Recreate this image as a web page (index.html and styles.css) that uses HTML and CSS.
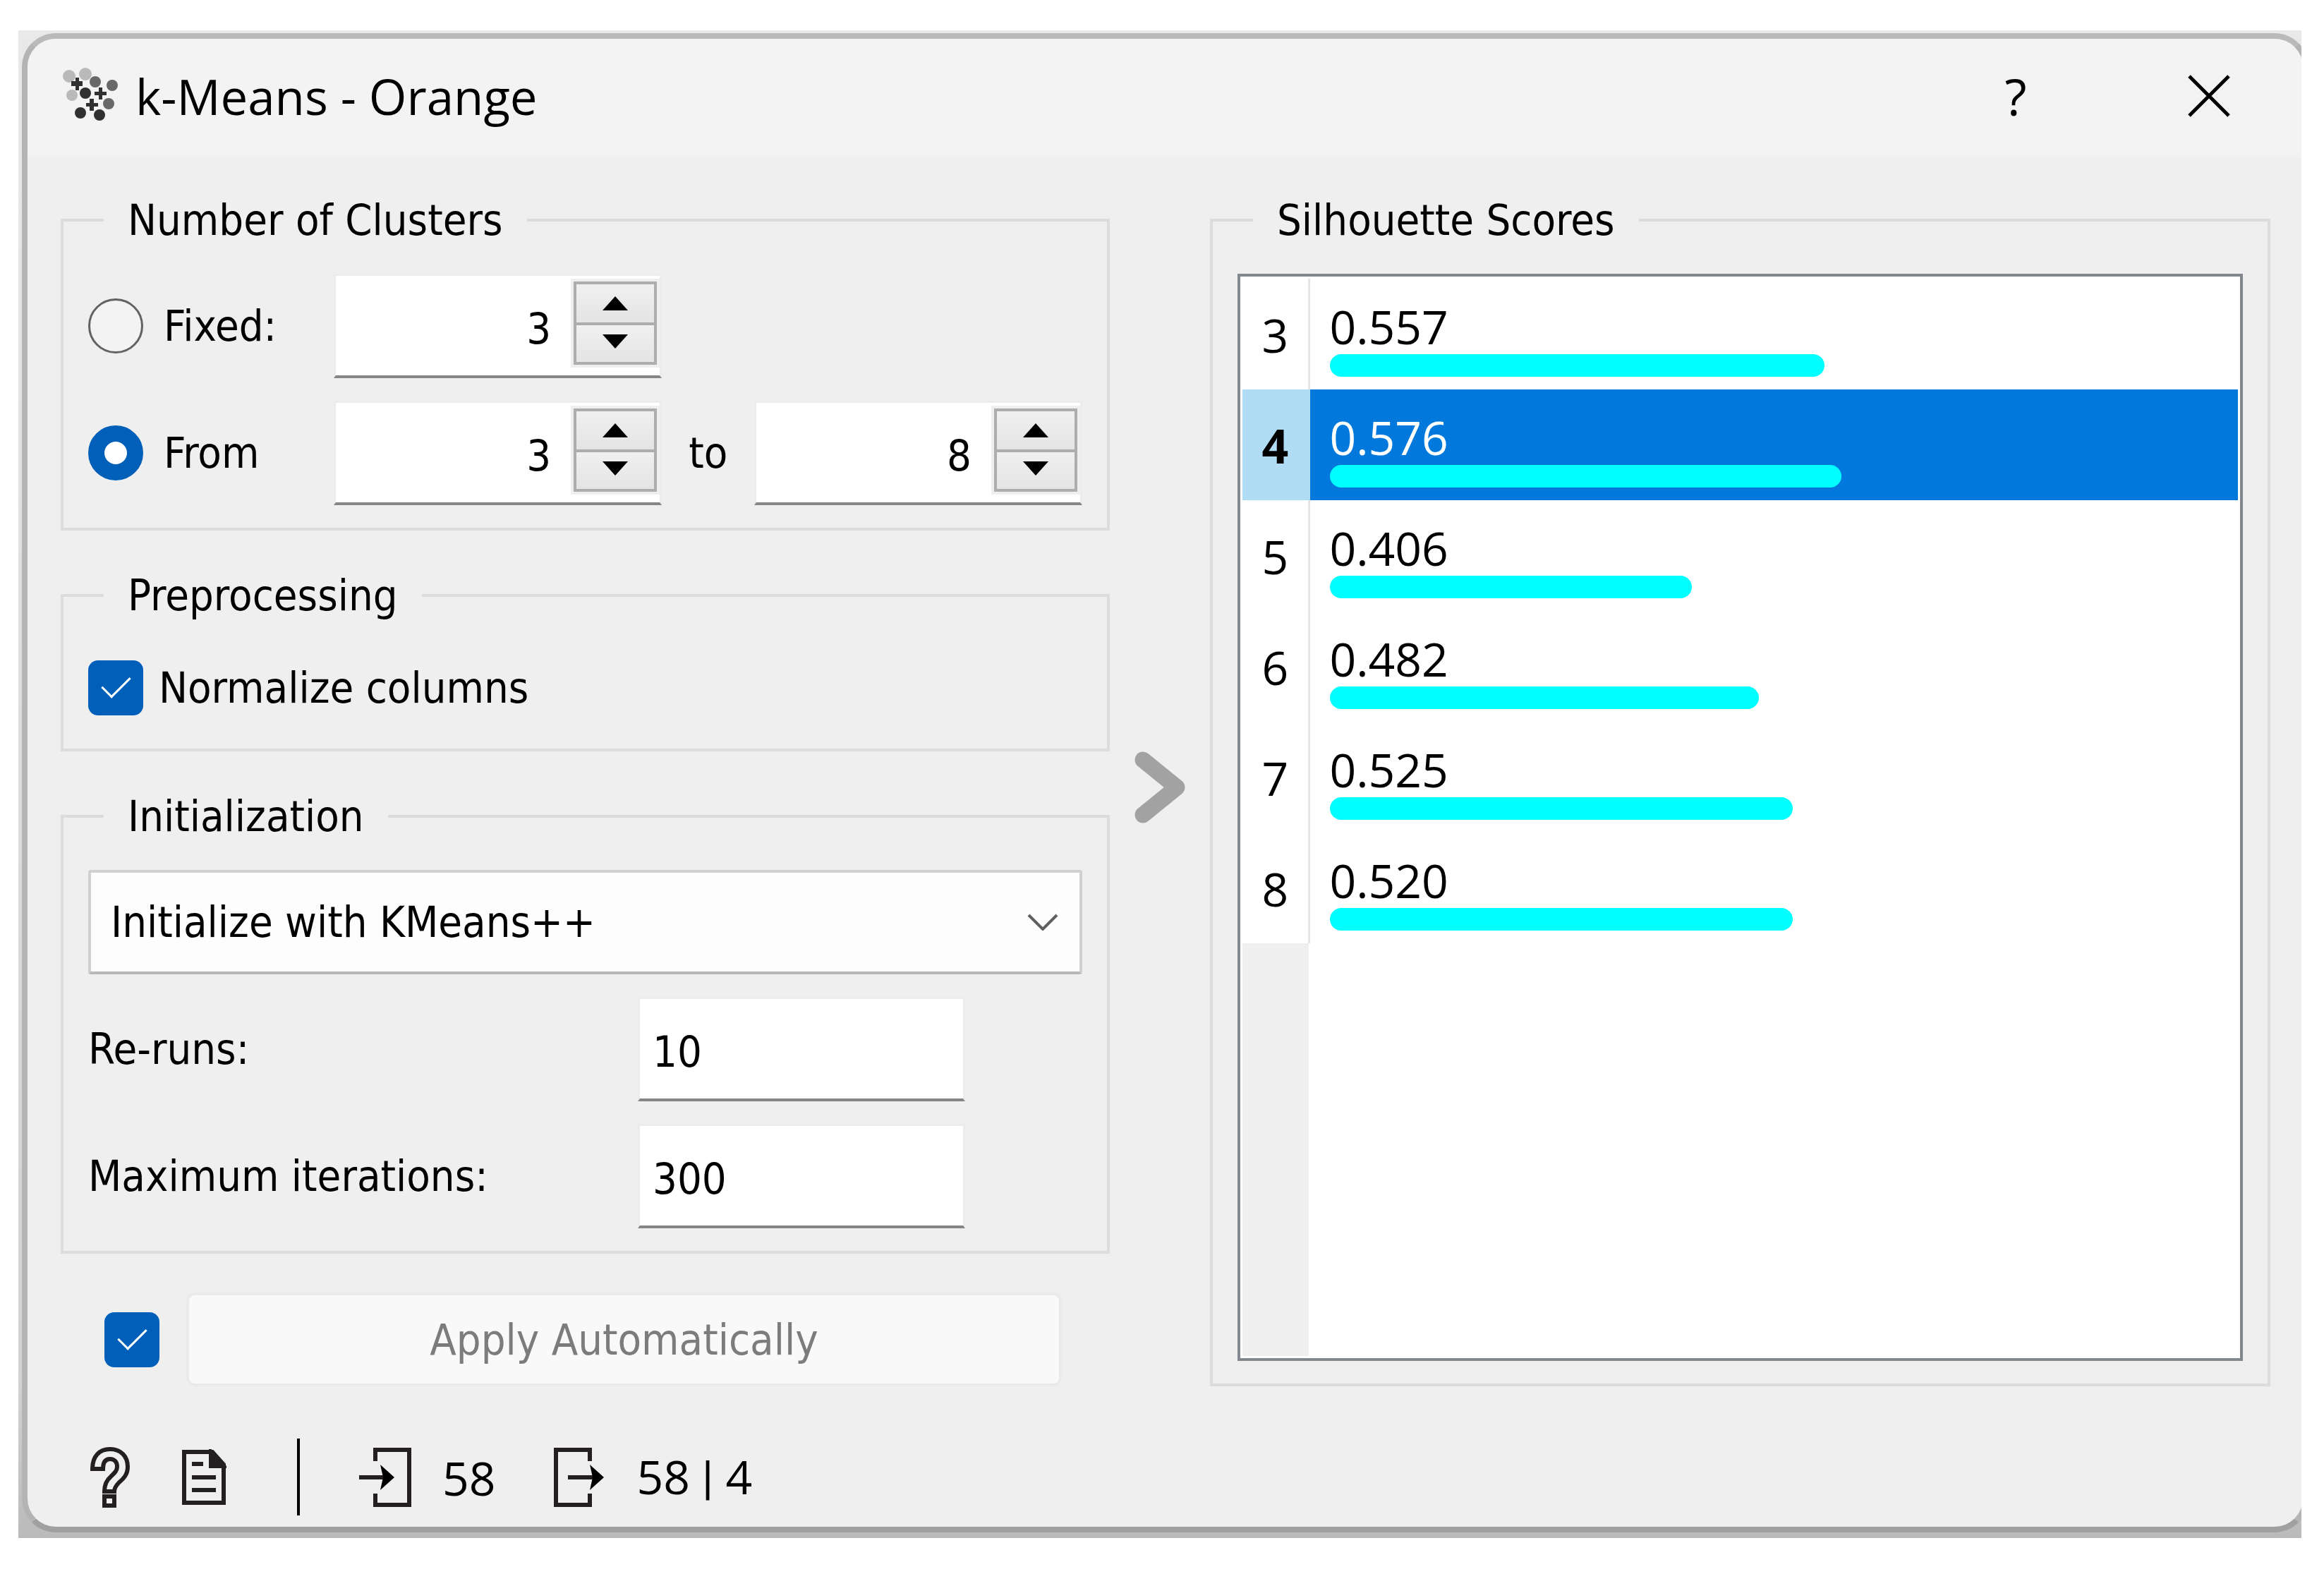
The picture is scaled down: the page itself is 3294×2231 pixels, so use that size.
FILE: index.html
```html
<!DOCTYPE html>
<html lang="en">
<head>
    <meta charset="UTF-8">
    <meta name="viewport" content="width=device-width, initial-scale=1.0">
    <title>k-Means - Orange</title>
    <link rel="stylesheet" href="styles.css">
</head>
<body>
    <div class="backdrop">
        <div class="window">
            <header class="titlebar">
                <svg class="app-icon" viewBox="0 0 80 80" aria-hidden="true">
                    <g fill="#b9b9b9">
                        <circle cx="10" cy="12" r="9"/>
                        <circle cx="33" cy="9" r="9"/>
                        <circle cx="14" cy="39" r="8"/>
                    </g>
                    <g fill="#686868">
                        <circle cx="47" cy="20" r="8"/>
                        <circle cx="71" cy="25" r="8"/>
                        <circle cx="66" cy="51" r="8"/>
                    </g>
                    <g fill="#303030">
                        <circle cx="33" cy="36" r="8"/>
                        <circle cx="26" cy="64" r="8"/>
                        <circle cx="53" cy="67" r="8"/>
                        <path d="M19 14h5v5h5v7h-5v6h-5v-6h-6v-7h6z"/>
                        <path d="M52 28h5v6h6v5h-6v6h-5v-6h-6v-5h6z"/>
                        <path d="M39 44h6v6h6v5h-6v6h-6v-6h-5v-5h5z"/>
                    </g>
                </svg>
                <h1>k-Means - Orange</h1>
                <button type="button" class="title-button">?</button>
                <button type="button" class="title-button" aria-label="Close">
                    <svg class="close-icon" viewBox="0 0 60 60"><path d="M2 2l56 56M58 2L2 58"/></svg>
                </button>
            </header>

            <main class="content">
                <form class="settings">
                    <fieldset>
                        <legend>Number of Clusters</legend>
                        <div class="cluster-row">
                            <label class="choice"><input type="radio" name="clusters">Fixed:</label>
                            <div class="spin">
                                <input type="number" value="3" aria-label="Fixed number of clusters">
                                <div class="stepper">
                                    <button type="button" aria-label="Increase"><svg viewBox="0 0 36 20"><path d="M18 0l18 20H0z"/></svg></button>
                                    <button type="button" aria-label="Decrease"><svg viewBox="0 0 36 20"><path d="M0 0h36L18 20z"/></svg></button>
                                </div>
                            </div>
                        </div>
                        <div class="cluster-row">
                            <label class="choice"><input type="radio" name="clusters" checked>From</label>
                            <div class="spin">
                                <input type="number" value="3" aria-label="From">
                                <div class="stepper">
                                    <button type="button" aria-label="Increase"><svg viewBox="0 0 36 20"><path d="M18 0l18 20H0z"/></svg></button>
                                    <button type="button" aria-label="Decrease"><svg viewBox="0 0 36 20"><path d="M0 0h36L18 20z"/></svg></button>
                                </div>
                            </div>
                            <label class="to" for="kTo">to</label>
                            <div class="spin">
                                <input type="number" id="kTo" value="8">
                                <div class="stepper">
                                    <button type="button" aria-label="Increase"><svg viewBox="0 0 36 20"><path d="M18 0l18 20H0z"/></svg></button>
                                    <button type="button" aria-label="Decrease"><svg viewBox="0 0 36 20"><path d="M0 0h36L18 20z"/></svg></button>
                                </div>
                            </div>
                        </div>
                    </fieldset>

                    <fieldset>
                        <legend>Preprocessing</legend>
                        <div class="check-row">
                            <label class="choice check"><input type="checkbox" checked>Normalize columns</label>
                        </div>
                    </fieldset>

                    <fieldset>
                        <legend>Initialization</legend>
                        <div class="combo">
                            <select aria-label="Initialization">
                                <option>Initialize with KMeans++</option>
                                <option>Random initialization</option>
                            </select>
                            <svg viewBox="0 0 44 24" aria-hidden="true"><path d="M2 2l20 20L42 2"/></svg>
                        </div>
                        <div class="field-row">
                            <label for="reruns">Re-runs:</label>
                            <input type="text" id="reruns" value="10">
                        </div>
                        <div class="field-row">
                            <label for="iterations">Maximum iterations:</label>
                            <input type="text" id="iterations" value="300">
                        </div>
                    </fieldset>

                    <div class="apply-row">
                        <input type="checkbox" checked aria-label="Apply automatically">
                        <button type="button" class="apply" disabled>Apply Automatically</button>
                    </div>
                </form>

                <div class="splitter">
                    <svg viewBox="0 0 72 102" aria-hidden="true"><path d="M12 12l48 39-48 39"/></svg>
                </div>

                <fieldset class="scores">
                    <legend>Silhouette Scores</legend>
                    <div class="table-frame">
                        <table>
                            <tr>
                                <th scope="row">3</th>
                                <td>0.557<div class="bar" style="width: 55.7%"></div></td>
                            </tr>
                            <tr class="selected">
                                <th scope="row">4</th>
                                <td>0.576<div class="bar" style="width: 57.6%"></div></td>
                            </tr>
                            <tr>
                                <th scope="row">5</th>
                                <td>0.406<div class="bar" style="width: 40.8%"></div></td>
                            </tr>
                            <tr>
                                <th scope="row">6</th>
                                <td>0.482<div class="bar" style="width: 48.3%"></div></td>
                            </tr>
                            <tr>
                                <th scope="row">7</th>
                                <td>0.525<div class="bar" style="width: 52.1%"></div></td>
                            </tr>
                            <tr>
                                <th scope="row">8</th>
                                <td>0.520<div class="bar" style="width: 52.1%"></div></td>
                            </tr>
                        </table>
                        <div class="header-rest"></div>
                    </div>
                </fieldset>
            </main>

            <footer class="statusbar">
                <button type="button" class="status-button" aria-label="Help">
                    <svg class="help-icon" viewBox="0 0 58 88">
                        <path d="M4 32C4 14 14 4 29 4s25 10 25 25c0 11-6 17-12 22-5 5-7 8-7 13H21c0-10 3-16 9-21 5-5 9-8 9-14 0-7-4-11-10-11s-10 4-10 14zM21 71h14v13H21z"/>
                    </svg>
                </button>
                <button type="button" class="status-button" aria-label="Report">
                    <svg class="report-icon" viewBox="0 0 64 80">
                        <path d="M4 4h40l16 18v54H4z"/>
                        <path d="M42 4v20h18z" fill="#231f20"/>
                        <path d="M15 21h16M15 40h34M15 58h34"/>
                    </svg>
                </button>
                <span class="divider"></span>
                <svg class="io-icon" viewBox="0 0 74 88" aria-hidden="true">
                    <path class="frame" d="M23 21V5h48v78H23V67"/>
                    <path class="shaft" d="M0 44h36"/>
                    <path d="M30 26l20 18-20 18 4-18z"/>
                </svg>
                <span class="count">58</span>
                <svg class="io-icon" viewBox="0 0 74 88" aria-hidden="true">
                    <path class="frame" d="M52 21V5H4v78h48V67"/>
                    <path class="shaft" d="M21 44h36"/>
                    <path d="M52 26l20 18-20 18 4-18z"/>
                </svg>
                <span class="count">58 <span class="bar-sign">|</span> 4</span>
            </footer>
        </div>
    </div>
</body>
</html>
```
FILE: styles.css
```css
* {
    box-sizing: border-box;
}
body {
    margin: 43px 32px 51px 26px;
    background: white;
    color: black;
    font-family: "DejaVu Sans Condensed", "Noto Sans", sans-serif;
    font-size: 61px;
    line-height: 74px;
}
input, select, button {
    font: inherit;
    color: inherit;
    margin: 0;
}
button {
    padding: 0;
    border: none;
    background: none;
}
svg {
    display: block;
    flex: none;
}

/* window */
.backdrop {
    overflow: hidden;
    padding: 4px 0 8px 5px;
    background: linear-gradient(#e9e9e9, #d2d2d2 90%, #bababa);
}
.window {
    margin-right: -10px;
    border: 8px solid #b4b4b4;
    border-top-color: #bababa;
    border-bottom-color: #a0a0a0;
    border-radius: 48px;
    background: #efefef;
    overflow: hidden;
}
.titlebar {
    display: flex;
    align-items: center;
    height: 168px;
    padding: 0 103px 6px 49px;
    background: #f3f3f3;
}
.app-icon {
    width: 80px;
    height: 80px;
    margin-right: 24px;
}
h1 {
    flex: 1;
    margin: 0;
    font-family: "Open Sans", sans-serif;
    font-size: 69px;
    font-weight: normal;
}
.title-button {
    display: flex;
    align-items: center;
    justify-content: center;
    width: 60px;
    height: 100px;
    margin-left: 214px;
    font-family: "Open Sans", sans-serif;
    font-size: 72px;
}
.close-icon {
    width: 60px;
    height: 60px;
    fill: none;
    stroke: black;
    stroke-width: 5;
}

/* groups */
.content {
    display: grid;
    grid-template-columns: minmax(0, 1487fr) 142px minmax(0, 1503fr);
    padding: 52px 46px 0 47px;
}
.settings {
    display: flex;
    flex-direction: column;
    gap: 55px;
}
fieldset {
    min-width: 0;
    margin: 0;
    padding: 39px 35px 32px;
    border: 4px solid #dcdcdc;
    display: flex;
    flex-direction: column;
    gap: 32px;
}
legend {
    margin-left: 22px;
    padding: 0 34px;
}
.cluster-row {
    display: grid;
    grid-template-columns: minmax(0, 348fr) minmax(0, 464fr) minmax(0, 131fr) minmax(0, 464fr);
    align-items: center;
}
.choice {
    display: flex;
    align-items: center;
    gap: 29px;
    white-space: nowrap;
}
.check {
    gap: 22px;
}
.to {
    text-align: center;
}
input[type="radio"], input[type="checkbox"] {
    appearance: none;
    flex: none;
    display: grid;
    place-content: center;
    width: 78px;
    height: 78px;
}
input[type="radio"] {
    border: 3px solid #626262;
    border-radius: 50%;
    background: #f3f3f3;
}
input[type="radio"]:checked {
    border: 23px solid #005fb8;
    background: white;
}
input[type="checkbox"] {
    border-radius: 14px;
    background: #005fb8;
}
input[type="checkbox"]::after {
    content: "";
    width: 18px;
    height: 36px;
    margin-bottom: 12px;
    border: solid white;
    border-width: 0 3px 3px 0;
    transform: rotate(45deg);
}

/* spin boxes */
.spin, .field-row input {
    height: 148px;
    border: 3px solid #ececec;
    border-bottom: 4px solid #858585;
    background: white;
}
.spin {
    display: flex;
}
.spin input {
    flex: 1;
    min-width: 0;
    padding: 8px 28px 0 0;
    border: none;
    background: none;
    text-align: right;
    appearance: textfield;
}
.spin input::-webkit-inner-spin-button {
    appearance: none;
    margin: 0;
}
.stepper {
    flex: none;
    display: grid;
    grid-template-rows: 62px 56px;
    width: 126px;
    height: 126px;
    margin-top: 4px;
    border: 4px solid #efefef;
}
.stepper button {
    display: flex;
    align-items: center;
    justify-content: center;
    border: 4px solid #adadad;
    background: linear-gradient(#f0f0f0, #e4e4e4);
}
.stepper button + button {
    border-top: none;
    padding-bottom: 6px;
}
.stepper svg {
    width: 36px;
    height: 20px;
}

/* preprocessing, initialization */
.check-row {
    display: flex;
    align-items: center;
    height: 109px;
}
.combo {
    position: relative;
}
.combo select {
    appearance: none;
    display: block;
    width: 100%;
    height: 148px;
    padding: 0 120px 0 28px;
    border: 4px solid #d0d0d0;
    border-bottom-color: #b8b8b8;
    border-radius: 4px;
    background: #fdfdfd;
}
.combo svg {
    position: absolute;
    top: 62px;
    right: 34px;
    width: 44px;
    height: 24px;
    fill: none;
    stroke: #606060;
    stroke-width: 4;
    pointer-events: none;
}
.field-row {
    display: grid;
    grid-template-columns: 779fr 464fr 166fr;
    align-items: center;
}
.field-row input {
    width: 100%;
    padding: 8px 18px 0;
}
.apply-row {
    display: flex;
    align-items: center;
    gap: 38px;
    padding: 0 68px 0 62px;
}
.apply {
    flex: 1;
    height: 133px;
    border: 4px solid #eaeaea;
    border-radius: 12px;
    background: #f9f9f9;
    color: #7c7c7c;
}
.splitter {
    display: flex;
    align-items: center;
    justify-content: center;
    padding-bottom: 8px;
}
.splitter svg {
    width: 72px;
    height: 102px;
    fill: none;
    stroke: #a2a2a2;
    stroke-width: 23;
    stroke-linecap: round;
    stroke-linejoin: round;
}

/* scores */
.table-frame {
    flex: 1;
    display: flex;
    flex-direction: column;
    padding: 3px;
    border: 4px solid #828790;
    background: white;
    font-family: "Open Sans", sans-serif;
    font-size: 66px;
}
table {
    width: 100%;
    border-collapse: collapse;
    table-layout: fixed;
}
th {
    width: 94px;
    padding: 0;
    border-right: 3px solid #e5e5e5;
    font-weight: normal;
}
td {
    height: 157px;
    padding: 34px 28px 18px;
    line-height: 67px;
}
.bar {
    height: 32px;
    margin-top: 6px;
    border-radius: 16px;
    background: cyan;
}
.selected th {
    background: #b0ddf5;
    border-color: #b0ddf5;
    font-weight: bold;
}
.selected td {
    background: #0078dc;
    color: white;
}
.header-rest {
    flex: 1;
    width: 94px;
    background: #efefef;
}

/* status bar */
.statusbar {
    display: flex;
    align-items: center;
    padding: 74px 88px 16px;
    font-family: "Open Sans", sans-serif;
    font-size: 66px;
}
.status-button {
    margin-right: 72px;
}
.help-icon, .report-icon {
    fill: none;
    stroke: #231f20;
    stroke-width: 6;
}
.help-icon {
    width: 58px;
    height: 88px;
}
.report-icon {
    width: 64px;
    height: 80px;
}
.divider {
    width: 4px;
    height: 109px;
    margin: 0 84px 0 28px;
    background: black;
}
.io-icon {
    width: 74px;
    height: 88px;
    margin-right: 44px;
}
.io-icon .frame, .io-icon .shaft {
    fill: none;
    stroke: #231f20;
    stroke-width: 6;
}
.count {
    margin-right: 82px;
}
.bar-sign {
    font-family: Roboto, sans-serif;
}
```
